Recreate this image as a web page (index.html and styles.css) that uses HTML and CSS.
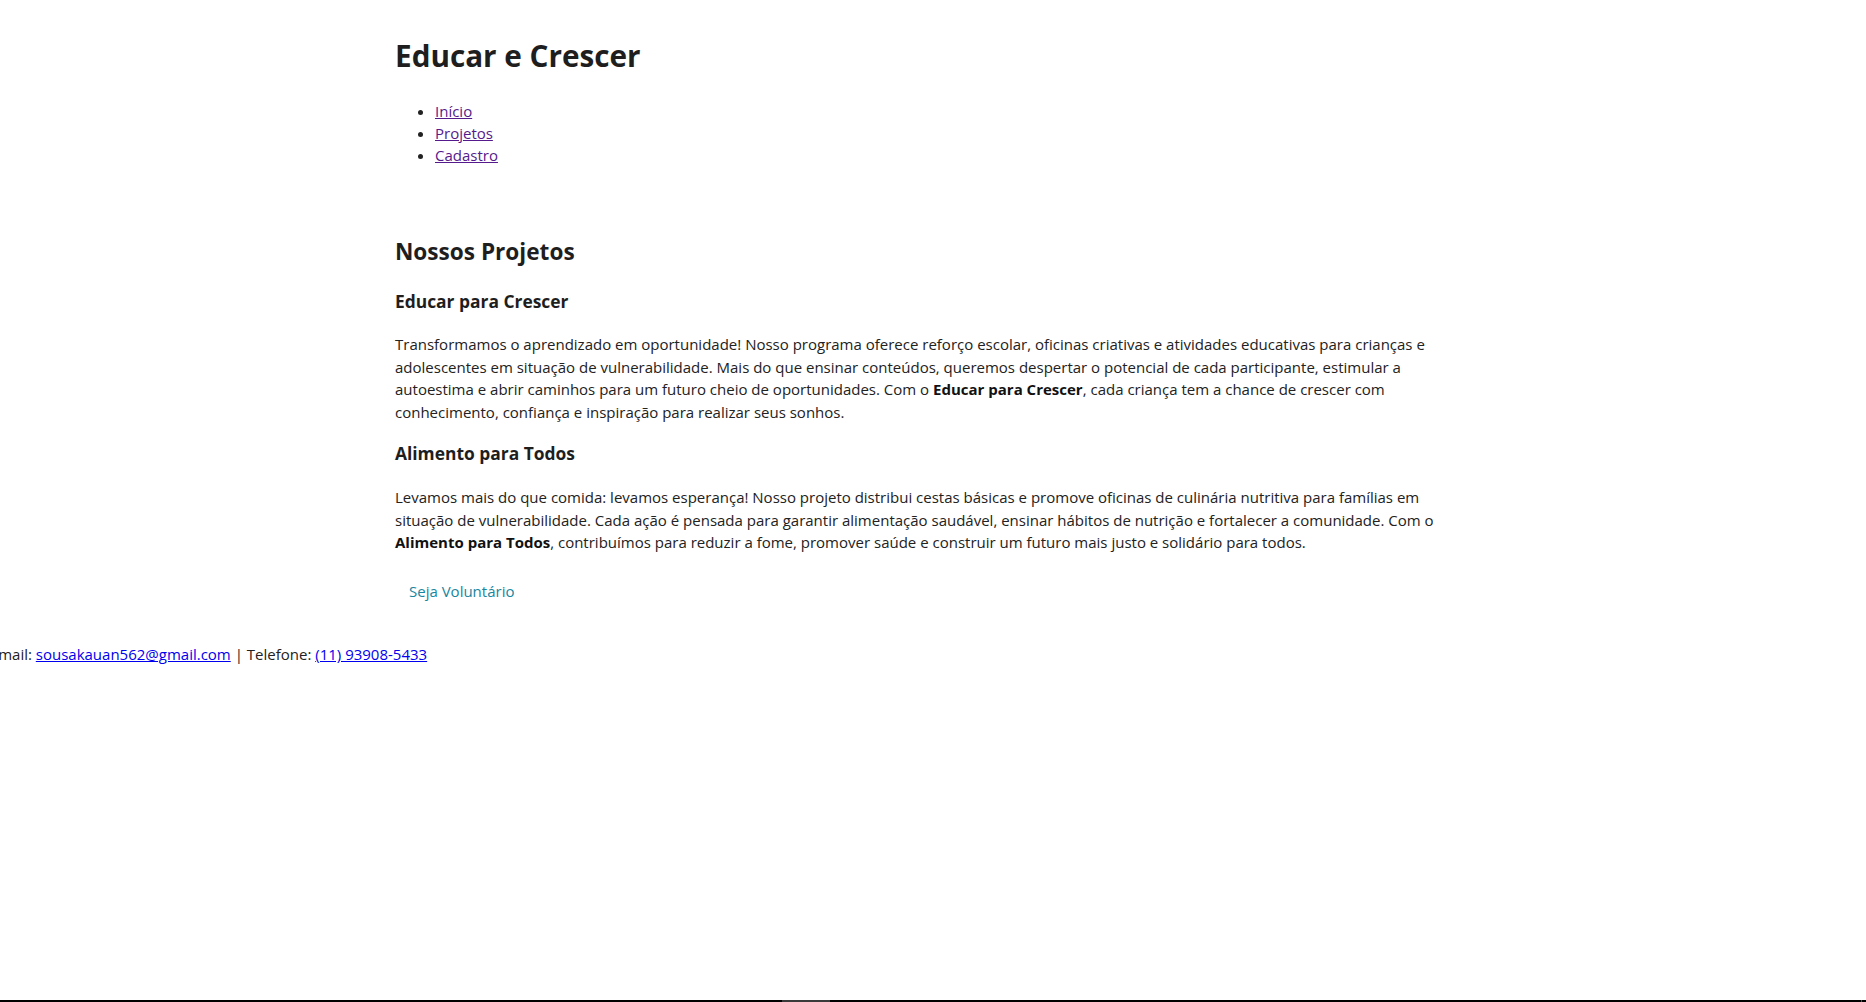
FILE: index.html
```html
<!DOCTYPE html>
<html lang="pt-BR">
<head>
<meta charset="utf-8">
<title>Educar e Crescer</title>
<link rel="stylesheet" href="styles.css">
</head>
<body>
<div class="page">
  <header class="wrap">
    <h1 class="site-title">Educar e Crescer</h1>
    <nav>
      <ul class="nav-list">
        <li><a class="nav-link" href="#">Início</a></li>
        <li><a class="nav-link" href="#">Projetos</a></li>
        <li><a class="nav-link" href="#">Cadastro</a></li>
      </ul>
    </nav>
  </header>
  <main class="wrap">
    <h2 class="section-title">Nossos Projetos</h2>
    <h3 class="project-title">Educar para Crescer</h3>
    <p class="project-text">Transformamos o aprendizado em oportunidade! Nosso programa oferece reforço escolar, oficinas criativas e atividades educativas para crianças e adolescentes em situação de vulnerabilidade. Mais do que ensinar conteúdos, queremos despertar o potencial de cada participante, estimular a autoestima e abrir caminhos para um futuro cheio de oportunidades. Com o <strong>Educar para Crescer</strong>, cada criança tem a chance de crescer com conhecimento, confiança e inspiração para realizar seus sonhos.</p>
    <h3 class="project-title second">Alimento para Todos</h3>
    <p class="project-text">Levamos mais do que comida: levamos esperança! Nosso projeto distribui cestas básicas e promove oficinas de culinária nutritiva para famílias em situação de vulnerabilidade. Cada ação é pensada para garantir alimentação saudável, ensinar hábitos de nutrição e fortalecer a comunidade. Com o <strong>Alimento para Todos</strong>, contribuímos para reduzir a fome, promover saúde e construir um futuro mais justo e solidário para todos.</p>
    <a class="cta" href="#">Seja Voluntário</a>
  </main>
  <footer class="footer">
    <p class="contact">E-mail: <a class="contact-link" href="#">sousakauan562@gmail.com</a> | Telefone: <a class="contact-link" href="#">(11) 93908-5433</a></p>
  </footer>
  <div class="taskbar"><span class="task-seg"></span><span class="task-dot"></span></div>
</div>
</body>
</html>
```

FILE: styles.css
```css
html, body {
  margin: 0;
  padding: 0;
  background: #fff;
}
body {
  font-family: "Segoe UI", "Open Sans", "Noto Sans", sans-serif;
  font-size: 15px;
  color: #222;
  overflow: hidden;
}
.page {
  min-height: 100vh;
  display: flex;
  flex-direction: column;
}
.wrap {
  width: 1076px;
  margin: 0 auto;
}
.site-title {
  font-size: 29.7px;
  line-height: 44px;
  font-weight: 700;
  margin: 34px 0 0;
  color: #1e1e1e;
}
.nav-list {
  margin: 22px 0 0;
  padding-left: 40px;
  line-height: 22px;
}
.nav-link {
  color: #551a8b;
}
.section-title {
  font-size: 22.6px;
  line-height: 34px;
  margin: 69px 0 0;
  color: #1e1e1e;
}
.project-title {
  font-size: 17.4px;
  line-height: 26px;
  margin: 19px 0 0;
  color: #1e1e1e;
}
.project-title.second {
  margin-top: 17px;
}
.project-text {
  line-height: 22.5px;
  margin: 19px 0 0;
}
.project-title.second + .project-text {
  margin-top: 20px;
}
.project-text strong {
  color: #111;
}
.cta {
  display: inline-block;
  margin-top: 16px;
  padding: 10px 14px;
  line-height: 22.5px;
  color: #17869e;
  text-decoration: none;
}
.footer {
  margin-top: 31px;
}
.contact {
  margin: 0 0 0 -15px;
  line-height: 22px;
}
.contact-link {
  color: #0000ee;
}
.taskbar {
  margin-top: auto;
  height: 2px;
  background: #000;
  display: flex;
}
.task-seg {
  margin-left: 782px;
  width: 48px;
  background: #3a3a3a;
}
.task-dot {
  margin-left: 1031px;
  width: 1px;
  background: #555;
}
```
